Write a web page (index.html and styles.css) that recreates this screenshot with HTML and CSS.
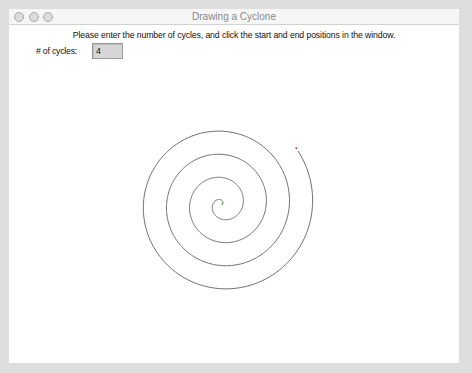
FILE: index.html
```html
<!DOCTYPE html>
<html>
<head>
<meta charset="utf-8">
<link rel="stylesheet" href="styles.css">
</head>
<body>
<div class="window">
  <div class="titlebar">
    <div class="lights">
      <span class="light"></span><span class="light"></span><span class="light"></span>
    </div>
    <div class="title">Drawing a Cyclone</div>
  </div>
  <div class="content">
    <svg class="canvas" width="450" height="338" viewBox="0 0 450 338">
      <path id="spiral" class="spiral" d=""></path>
      <rect class="dot-start" x="212.5" y="178.5" width="1.5" height="1.5"></rect>
      <rect class="dot-end" x="286.5" y="122.5" width="1.5" height="1.5"></rect>
    </svg>
    <p class="prompt">Please enter the number of cycles, and click the start and end positions in the window.</p>
    <div class="form-row">
      <label class="label">#&nbsp;of cycles:</label>
      <div class="field">4</div>
    </div>
  </div>
</div>
<script src="script.js"></script>
</body>
</html>
```

FILE: styles.css
```css
html, body {
  margin: 0;
  padding: 0;
  background: #dedede;
}
body {
  width: 472px;
  height: 373px;
  overflow: hidden;
  font-family: "Liberation Sans", Arial, sans-serif;
}
.window {
  margin: 9px 0 0 9px;
  width: 450px;
  height: 354px;
  display: flex;
  flex-direction: column;
  background: #ffffff;
}
.titlebar {
  height: 15px;
  border-bottom: 1px solid #d2d2d2;
  background: #f6f6f6;
  position: relative;
  display: flex;
  align-items: center;
  justify-content: center;
  border-radius: 3px 3px 0 0;
}
.lights {
  position: absolute;
  left: 5px;
  top: 3px;
  display: flex;
  gap: 4.5px;
}
.light {
  width: 8px;
  height: 8px;
  border-radius: 50%;
  background: #dcdcdc;
  border: 1px solid #a9a9a9;
}
.title {
  font-size: 10px;
  color: #8a8a8a;
  letter-spacing: 0;
}
.content {
  flex: 1;
  position: relative;
}
.canvas {
  position: absolute;
  left: 0;
  top: 0;
}
.spiral {
  fill: none;
  stroke: #5a5a5a;
  stroke-width: 0.9;
}
.dot-start { fill: #22dd22; }
.dot-end { fill: #ee1111; }
.prompt {
  position: relative;
  margin: 5px 0 0 0;
  text-align: center;
  font-size: 8.7px;
  line-height: 10px;
  color: #111;
  letter-spacing: -0.1px;
}
.form-row {
  position: relative;
  display: flex;
  align-items: center;
  margin-top: 3px;
  padding-left: 27px;
}
.label {
  font-size: 8.7px;
  color: #111;
  width: 56px;
  letter-spacing: -0.2px;
}
.field {
  width: 26px;
  height: 14px;
  border: 1px solid #9a9a9a;
  background: #d6d6d6;
  box-shadow: inset 1px 1px 0 #bdbdbd;
  font-size: 8.7px;
  line-height: 14px;
  padding-left: 3px;
  box-sizing: content-box;
  color: #111;
}
```

FILE: script.js
```js
(function () {
  var cx = 213.2, cy = 179.2;
  var ex = 289, ey = 126;
  var cycles = 4;
  var dx = ex - cx, dy = cy - ey;
  var R = Math.sqrt(dx * dx + dy * dy);
  var a0 = Math.atan2(dy, dx);
  var total = cycles * 2 * Math.PI;
  var steps = 1200;
  var d = "";
  for (var i = 0; i <= steps; i++) {
    var t = total * i / steps;
    var r = R * t / total;
    var a = a0 + t;
    var x = cx + r * Math.cos(a);
    var y = cy - r * Math.sin(a);
    d += (i === 0 ? "M" : "L") + x.toFixed(2) + " " + y.toFixed(2);
  }
  document.getElementById("spiral").setAttribute("d", d);
})();
```
